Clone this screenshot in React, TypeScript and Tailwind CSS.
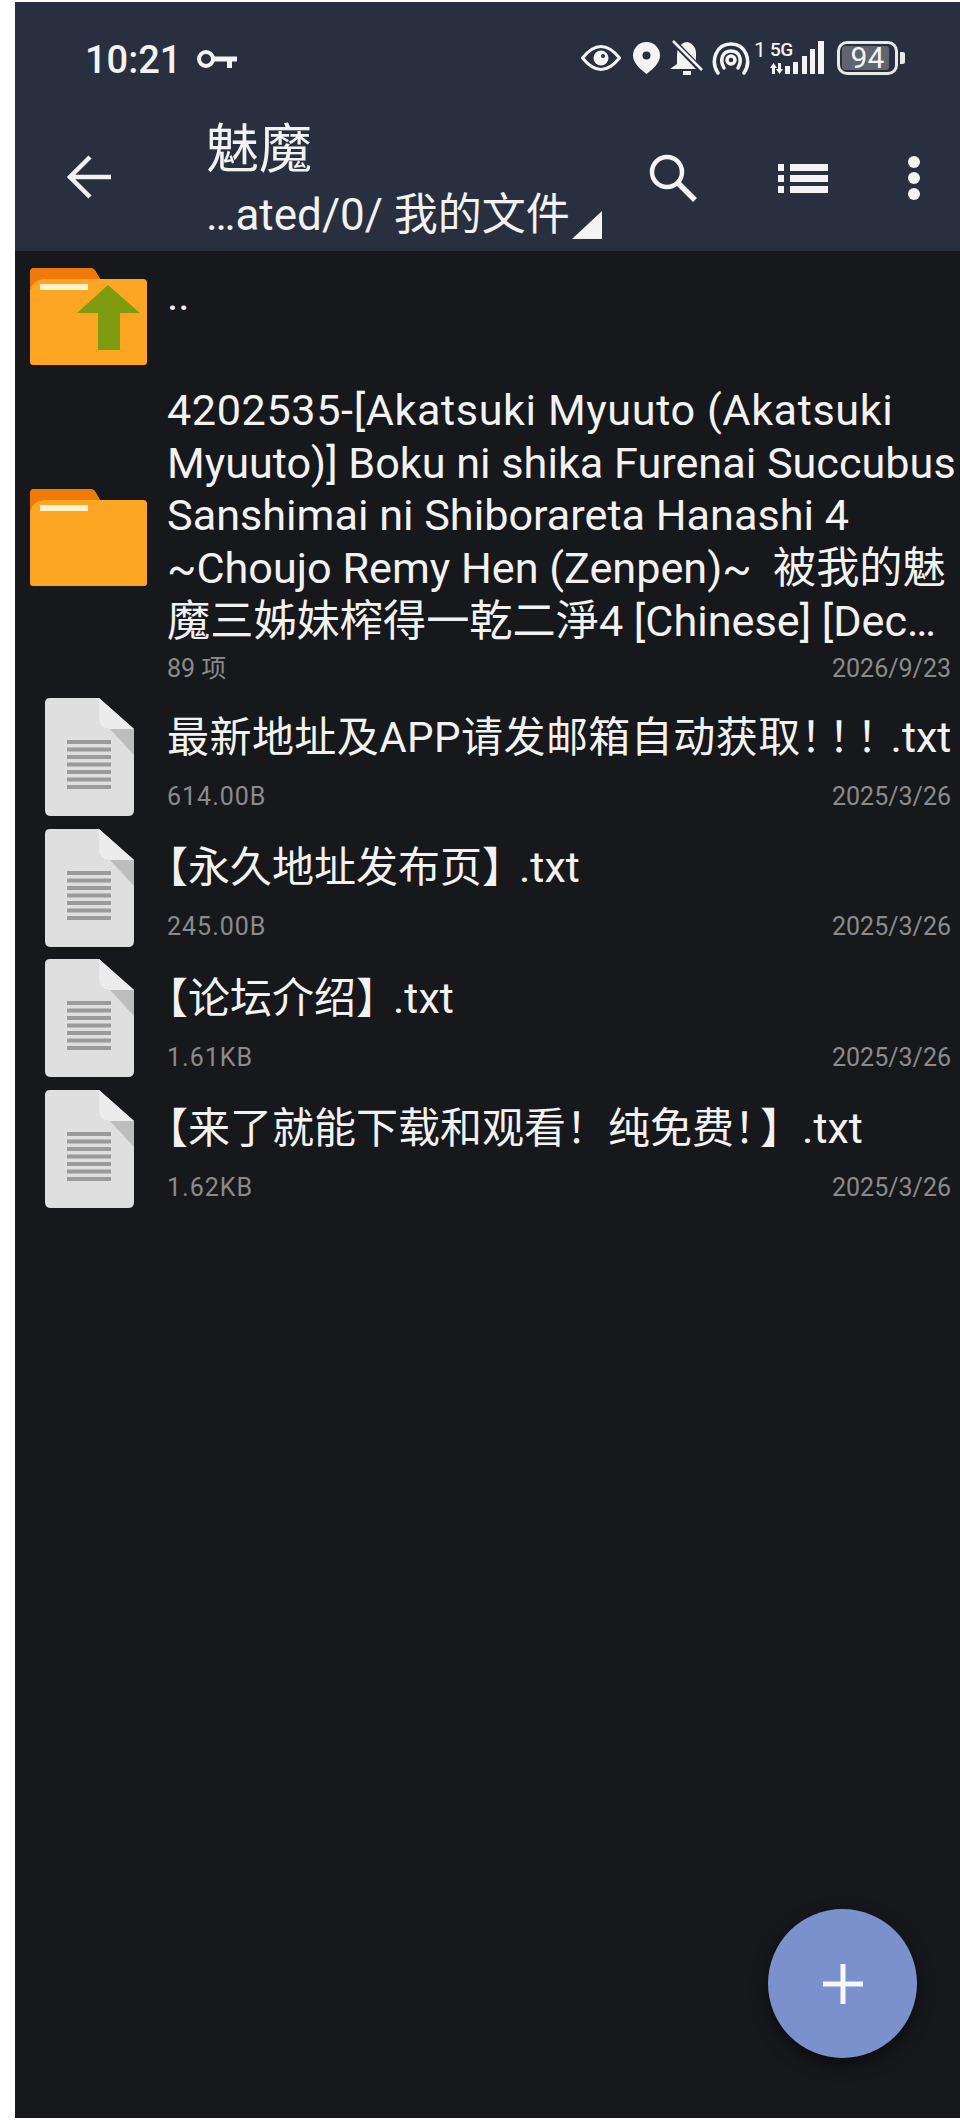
import type { ReactNode } from "react";

const FONT = "font-['Roboto','Noto_Sans_CJK_SC',sans-serif]";

function FolderIcon({ up = false }: { up?: boolean }) {
  return (
    <svg className="shrink-0" width="118" height="98" viewBox="0 0 118 98">
      <path d="M4 0H60Q64 0 66 4L70 11H113Q117 11 117 15V94Q117 97 114 97H3Q0 97 0 94V5Q0 0 4 0Z" fill="#fca624" />
      <path d="M4 0H60Q64 0 66 4L70 11H14Q4 11 0 22V5Q0 0 4 0Z" fill="#ef7a08" />
      <rect x="10" y="16" width="48" height="6" fill="#fff3cf" />
      {up && <path d="M78 17L110 45H90V82H68V45H47Z" fill="#7f9c10" />}
    </svg>
  );
}

function FileIcon() {
  return (
    <svg className="shrink-0" width="89" height="118" viewBox="0 0 89 118">
      <path d="M5 0H54L89 31V112Q89 118 83 118H6Q0 118 0 112V5Q0 0 5 0Z" fill="#dfdfdf" />
      <path d="M54 0L89 31H66Q54 31 54 19Z" fill="#ececec" />
      <path d="M65 31H89V57Z" fill="#bdbdbd" />
      {[41, 48.5, 56, 63.5, 71, 78.5, 86].map((y) => (
        <rect key={y} x="22" y={y + 1} width="44" height="4" fill="#9a9a9a" />
      ))}
    </svg>
  );
}

const files: { name: ReactNode; size: string }[] = [
  {
    name: (
      <>
        <span className="tracking-[0.45px]">最新地址及APP请发邮箱自动获取</span>
        <span className="tracking-[-14px]">！！！</span>
        <span className="text-[43px] ml-[6px]">.txt</span>
      </>
    ),
    size: "614.00B",
  },
  {
    name: (
      <>
        【永久地址发布页】
        <span className="text-[43px] -ml-[5px]">.txt</span>
      </>
    ),
    size: "245.00B",
  },
  {
    name: (
      <>
        【论坛介绍】
        <span className="text-[43px] -ml-[5px]">.txt</span>
      </>
    ),
    size: "1.61KB",
  },
  {
    name: (
      <>
        【来了就能下载和观看！纯免费<span className="tracking-[-16px]">！</span>】
        <span className="text-[43px]">.txt</span>
      </>
    ),
    size: "1.62KB",
  },
];

function StatusIcons() {
  return (
    <div className="flex items-center text-[#f4f4f4]">
      <svg width="40" height="28" viewBox="0 0 40 28">
        <path d="M1.5 14Q20 -9 38.5 14Q20 37 1.5 14Z" fill="none" stroke="#f4f4f4" strokeWidth="3" />
        <circle cx="20" cy="14" r="7.5" fill="#f4f4f4" />
        <circle cx="22" cy="12" r="2" fill="#28303f" />
      </svg>
      <svg className="ml-[12px]" width="27" height="32" viewBox="0 0 27 32">
        <path d="M13.5 0C6 0 0 6 0 13.5C0 21 7 27 13.5 32C20 27 27 21 27 13.5C27 6 21 0 13.5 0Z" fill="#f4f4f4" />
        <circle cx="13.5" cy="13.5" r="4" fill="#28303f" />
      </svg>
      <svg className="ml-[10px]" width="33" height="36" viewBox="0 0 33 36">
        <path d="M17 2C10 3 7 9 7 15V24L0 29H31L26 21V13C26 7 22 3 17 2Z" fill="#f4f4f4" />
        <rect x="13" y="31" width="8" height="4" fill="#f4f4f4" />
        <path d="M2 0L32 31" stroke="#28303f" strokeWidth="6" />
        <path d="M3 1L32 30" stroke="#f4f4f4" strokeWidth="2.5" />
      </svg>
      <svg className="ml-[9px]" width="38" height="33" viewBox="0 0 38 33">
        <g fill="none" stroke="#f4f4f4" strokeWidth="3.5" strokeLinecap="round">
          <path d="M6 31C-2 19 4 2 19 2C34 2 40 19 32 31" />
          <path d="M12 26C7 17 11 9 19 9C27 9 31 17 26 26" />
          <circle cx="19" cy="18" r="4" />
        </g>
      </svg>
      <span className="ml-[4px] w-[10px] self-start text-[21px] leading-[20px] font-['Roboto',sans-serif]">1</span>
      <div className="relative ml-[6px] w-[54px] h-[34px]">
        <span className="absolute left-0 -top-[1px] text-[19px] leading-[20px] font-medium tracking-tight font-['Roboto',sans-serif]">
          5G
        </span>
        <svg className="absolute left-0 top-0" width="54" height="34" viewBox="0 0 54 34">
          <path d="M3.5 22L7 27H5V33H2V27H0ZM8 22H11V28H13L9.5 33L6 28H8Z" fill="#f4f4f4" />
          <rect x="15" y="25" width="5" height="8" fill="#f4f4f4" />
          <rect x="23" y="21" width="5" height="12" fill="#f4f4f4" />
          <rect x="32" y="15" width="5" height="18" fill="#f4f4f4" />
          <rect x="40" y="8" width="5" height="25" fill="#f4f4f4" />
          <rect x="48" y="0" width="6" height="33" fill="#f4f4f4" />
        </svg>
      </div>
      <div className="flex items-center ml-[13px]">
        <div className="w-[61px] h-[34px] rounded-[10px] border-[3px] border-[#e8e8e8] p-[2px]">
          <div className="h-full w-[92%] rounded-[3px] bg-[#5f6470] flex items-center justify-center text-[30px] leading-none font-['Roboto',sans-serif] text-[#f4f4f4] pl-[4px]">
            94
          </div>
        </div>
        <div className="w-[5px] h-[12px] ml-[2px] bg-[#e8e8e8] rounded-r-[2px]" />
      </div>
    </div>
  );
}

export default function App() {
  return (
    <div className={`w-[960px] h-[2120px] bg-white pl-[15px] pt-[2px] pb-[2px] ${FONT}`}>
      <div className="relative h-full flex flex-col bg-[#17181c] overflow-hidden">
        {/* Status bar + toolbar */}
        <header className="h-[249px] shrink-0 bg-[#28303f] text-[#f2f2f2]">
          <div className="flex items-center justify-between h-[34px] mt-[39px] pl-[70px] pr-[55px]">
            <div className="flex items-center gap-[15px] mt-[3px]">
              <span className="text-[38px] leading-none font-medium">10:21</span>
              <svg width="42" height="20" viewBox="0 0 42 20">
                <circle cx="10" cy="9" r="7" fill="none" stroke="#f4f4f4" strokeWidth="4" />
                <path d="M17 6.5H41V11.5H36V18H31V11.5H17Z" fill="#f4f4f4" />
              </svg>
            </div>
            <StatusIcons />
          </div>
          <div className="flex items-start mt-[44px]">
            <svg className="ml-[52px] mt-[36px] shrink-0" width="44" height="44" viewBox="0 0 44 44">
              <path d="M44 22H4M23 2L3 22L23 42" fill="none" stroke="#f2f2f2" strokeWidth="4.5" />
            </svg>
            <div className="ml-[95px] w-[442px] shrink-0">
              <div className="text-[53px] leading-[60px] pt-[1px]">魅魔</div>
              <div className="flex items-end mt-[9px]">
                <span className="text-[44px] leading-[52px] whitespace-nowrap">…ated/0/ 我的文件</span>
                <svg className="ml-[2px] mb-[2px] shrink-0" width="30" height="28" viewBox="0 0 30 28">
                  <path d="M30 0V28H0Z" fill="#f4f4f4" />
                </svg>
              </div>
            </div>
            <svg className="mt-[34px] shrink-0" width="50" height="50" viewBox="0 0 50 50">
              <circle cx="19" cy="19" r="15" fill="none" stroke="#f4f4f4" strokeWidth="4.5" />
              <path d="M30 30L47 47" stroke="#f4f4f4" strokeWidth="5.5" />
            </svg>
            <svg className="ml-[80px] mt-[44px] shrink-0" width="50" height="30" viewBox="0 0 50 30">
              <path d="M0 1H6V8H0ZM12 1H50V8H12ZM0 12H6V19H0ZM12 12H50V19H12ZM0 23H6V30H0ZM12 23H50V30H12Z" fill="#f4f4f4" />
            </svg>
            <svg className="ml-[79px] mt-[36px] shrink-0" width="14" height="46" viewBox="0 0 14 46">
              <circle cx="7" cy="7" r="6" fill="#f4f4f4" />
              <circle cx="7" cy="23" r="6" fill="#f4f4f4" />
              <circle cx="7" cy="39" r="6" fill="#f4f4f4" />
            </svg>
          </div>
        </header>

        {/* File list */}
        <main className="flex flex-col">
          <div className="flex h-[122px] pl-[15px] pt-[17px]">
            <FolderIcon up />
            <span className="ml-[19px] mt-[5px] text-[43px] leading-[44px] text-[#f2f2f2]">..</span>
          </div>

          <div className="flex h-[319px] pl-[15px]">
            <div className="pt-[116px] shrink-0">
              <FolderIcon />
            </div>
            <div className="ml-[19px] flex-1 min-w-0 pr-[9px]">
              <div className="text-[43.2px] leading-[52.7px] text-[#f2f2f2] pt-[12px] whitespace-nowrap">
                <div className="tracking-[0.6px]">4202535-[Akatsuki Myuuto (Akatsuki</div>
                <div>Myuuto)] Boku ni shika Furenai Succubus</div>
                <div>Sanshimai ni Shiborareta Hanashi 4</div>
                <div>~Choujo Remy Hen (Zenpen)~&nbsp; 被我的魅</div>
                <div>魔三姊妹榨得一乾二淨4 [Chinese] [Dec…</div>
              </div>
              <div className="flex justify-between mt-[6px] text-[25px] leading-[28px] text-[#8b8b8b]">
                <span>89 项</span>
                <span>2026/9/23</span>
              </div>
            </div>
          </div>

          {files.map((f) => (
            <div key={f.size} className="flex h-[130.5px] pl-[30px] items-center">
              <FileIcon />
              <div className="ml-[33px] flex-1 min-w-0 pr-[9px] pt-[8px]">
                <div className="text-[42px] leading-[50px] text-[#f2f2f2] whitespace-nowrap [text-spacing-trim:trim-start]">
                  {f.name}
                </div>
                <div className="flex justify-between mt-[20px] text-[25px] leading-[28px] text-[#8b8b8b]">
                  <span className="tracking-[1px]">{f.size}</span>
                  <span>2025/3/26</span>
                </div>
              </div>
            </div>
          ))}
        </main>

        {/* Floating add button */}
        <button className="absolute right-[43px] bottom-[60px] w-[149px] h-[149px] rounded-full bg-[#7b91cd] shadow-[0_6px_16px_rgba(0,0,0,0.55)] flex items-center justify-center">
          <svg width="40" height="40" viewBox="0 0 40 40">
            <path d="M17.5 0H22.5V17.5H40V22.5H22.5V40H17.5V22.5H0V17.5H17.5Z" fill="#f6f8ff" />
          </svg>
        </button>
      </div>
    </div>
  );
}
